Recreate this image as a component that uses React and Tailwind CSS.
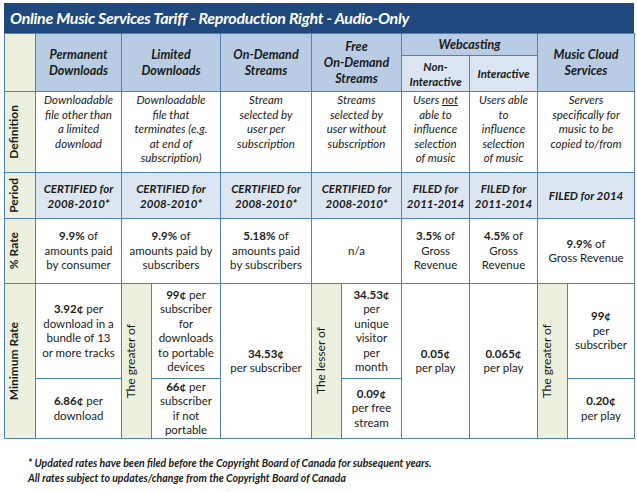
import React from "react";

const head = "border border-[#4f81bd] p-0 text-center align-middle bg-[#b8cce4] font-bold italic text-[12.5px] leading-[16px] text-[#1a1a1a] whitespace-nowrap";
const sub = "border border-[#4f81bd] p-0 text-center align-middle bg-[#dbe5f1] font-bold italic text-[11.5px] leading-[15px] text-[#1a1a1a] whitespace-nowrap";
const label = "border border-[#4f81bd] p-0 bg-[#ebf1de] align-middle";
const defn = "border border-[#4f81bd] p-0 pt-[1px] text-center align-top italic text-[11.5px] leading-[14.5px] text-[#222] whitespace-nowrap";
const period = "border border-[#4f81bd] p-0 text-center align-middle bg-[#dce6f1] font-bold italic text-[11.5px] leading-[15px] text-[#1a1a1a] whitespace-nowrap";
const rate = "border border-[#4f81bd] p-0 text-center align-middle text-[11.5px] leading-[14.5px] text-[#222] whitespace-nowrap";

function Vertical({ children, bold }) {
  return (
    <div
      className={
        "mx-auto [writing-mode:vertical-rl] rotate-180 whitespace-nowrap text-[12px] text-[#1a1a1a] " +
        (bold ? "font-bold" : "font-normal")
      }
    >
      {children}
    </div>
  );
}

function Lines({ items }) {
  return items.map((t, i) => (
    <div key={i}>{t}</div>
  ));
}

function App() {
  return (
    <div className="w-[637px] h-[492px] bg-white pt-[3px] pl-[4px] font-['Lato','Open_Sans',sans-serif]">
      <div className="w-[630px] h-[30px] bg-[#1f497d] text-white font-bold italic text-[16px] tracking-[-0.3px] pl-[6px] flex items-center">
        Online Music Services Tariff - Reproduction Right - Audio-Only
      </div>
      <table className="table-fixed border-collapse w-[630px]">
        <colgroup>
          <col className="w-[31px]" />
          <col className="w-[86px]" />
          <col className="w-[30px]" />
          <col className="w-[69px]" />
          <col className="w-[91px]" />
          <col className="w-[30px]" />
          <col className="w-[60px]" />
          <col className="w-[68px]" />
          <col className="w-[68px]" />
          <col className="w-[30px]" />
          <col className="w-[67px]" />
        </colgroup>
        <tbody>
          <tr className="h-[22px]">
            <td rowSpan={2} className={label}></td>
            <td rowSpan={2} className={head}>
              <Lines items={["Permanent", "Downloads"]} />
            </td>
            <td rowSpan={2} colSpan={2} className={head}>
              <Lines items={["Limited", "Downloads"]} />
            </td>
            <td rowSpan={2} className={head}>
              <Lines items={["On-Demand", "Streams"]} />
            </td>
            <td rowSpan={2} colSpan={2} className={head}>
              <Lines items={["Free", "On-Demand", "Streams"]} />
            </td>
            <td colSpan={2} className={head}>
              Webcasting
            </td>
            <td rowSpan={2} colSpan={2} className={head}>
              <Lines items={["Music Cloud", "Services"]} />
            </td>
          </tr>
          <tr className="h-[36px]">
            <td className={sub}>
              <Lines items={["Non-", "Interactive"]} />
            </td>
            <td className={sub}>Interactive</td>
          </tr>

          <tr className="h-[81px]">
            <td className={label}>
              <Vertical bold>Definition</Vertical>
            </td>
            <td className={defn}>
              <Lines items={["Downloadable", "file other than", "a limited", "download"]} />
            </td>
            <td colSpan={2} className={defn}>
              <Lines items={["Downloadable", "file that", "terminates (e.g.", "at end of", "subscription)"]} />
            </td>
            <td className={defn}>
              <Lines items={["Stream", "selected by", "user per", "subscription"]} />
            </td>
            <td colSpan={2} className={defn}>
              <Lines items={["Streams", "selected by", "user without", "subscription"]} />
            </td>
            <td className={defn}>
              <div>
                Users <span className="underline">not</span>
              </div>
              <Lines items={["able to", "influence", "selection", "of music"]} />
            </td>
            <td className={defn}>
              <Lines items={["Users able", "to", "influence", "selection", "of music"]} />
            </td>
            <td colSpan={2} className={defn}>
              <Lines items={["Servers", "specifically for", "music to be", "copied to/from"]} />
            </td>
          </tr>

          <tr className="h-[46px]">
            <td className={label}>
              <Vertical bold>Period</Vertical>
            </td>
            <td className={period}>
              <Lines items={["CERTIFIED for", "2008-2010*"]} />
            </td>
            <td colSpan={2} className={period}>
              <Lines items={["CERTIFIED for", "2008-2010*"]} />
            </td>
            <td className={period}>
              <Lines items={["CERTIFIED for", "2008-2010*"]} />
            </td>
            <td colSpan={2} className={period}>
              <Lines items={["CERTIFIED for", "2008-2010*"]} />
            </td>
            <td className={period}>
              <Lines items={["FILED for", "2011-2014"]} />
            </td>
            <td className={period}>
              <Lines items={["FILED for", "2011-2014"]} />
            </td>
            <td colSpan={2} className={period}>
              FILED for 2014
            </td>
          </tr>

          <tr className="h-[65px]">
            <td className={label}>
              <Vertical bold>% Rate</Vertical>
            </td>
            <td className={rate}>
              <div>
                <b>9.9%</b> of
              </div>
              <Lines items={["amounts paid", "by consumer"]} />
            </td>
            <td colSpan={2} className={rate}>
              <div>
                <b>9.9%</b> of
              </div>
              <Lines items={["amounts paid by", "subscribers"]} />
            </td>
            <td className={rate}>
              <div>
                <b>5.18%</b> of
              </div>
              <Lines items={["amounts paid", "by subscribers"]} />
            </td>
            <td colSpan={2} className={rate}>
              n/a
            </td>
            <td className={rate}>
              <div>
                <b>3.5%</b> of
              </div>
              <Lines items={["Gross", "Revenue"]} />
            </td>
            <td className={rate}>
              <div>
                <b>4.5%</b> of
              </div>
              <Lines items={["Gross", "Revenue"]} />
            </td>
            <td colSpan={2} className={rate}>
              <div>
                <b>9.9%</b> of
              </div>
              <div>Gross Revenue</div>
            </td>
          </tr>

          <tr className="h-[95px]">
            <td rowSpan={2} className={label}>
              <Vertical bold>Minimum Rate</Vertical>
            </td>
            <td className={rate}>
              <div>
                <b>3.92¢</b> per
              </div>
              <Lines items={["download in a", "bundle of 13", "or more tracks"]} />
            </td>
            <td rowSpan={2} className={label}>
              <Vertical>The greater of</Vertical>
            </td>
            <td className={rate}>
              <div>
                <b>99¢</b> per
              </div>
              <Lines items={["subscriber", "for", "downloads", "to portable", "devices"]} />
            </td>
            <td rowSpan={2} className={rate}>
              <b>34.53¢</b>
              <div>per subscriber</div>
            </td>
            <td rowSpan={2} className={label}>
              <Vertical>The lesser of</Vertical>
            </td>
            <td className={rate}>
              <b>34.53¢</b>
              <Lines items={["per", "unique", "visitor", "per", "month"]} />
            </td>
            <td rowSpan={2} className={rate}>
              <b>0.05¢</b>
              <div>per play</div>
            </td>
            <td rowSpan={2} className={rate}>
              <b>0.065¢</b>
              <div>per play</div>
            </td>
            <td rowSpan={2} className={label}>
              <Vertical>The greater of</Vertical>
            </td>
            <td className={rate}>
              <b>99¢</b>
              <Lines items={["per", "subscriber"]} />
            </td>
          </tr>
          <tr className="h-[60px]">
            <td className={rate}>
              <div>
                <b>6.86¢</b> per
              </div>
              <div>download</div>
            </td>
            <td className={rate}>
              <div>
                <b>66¢</b> per
              </div>
              <Lines items={["subscriber", "if not", "portable"]} />
            </td>
            <td className={rate}>
              <b>0.09¢</b>
              <Lines items={["per free", "stream"]} />
            </td>
            <td className={rate}>
              <b>0.20¢</b>
              <div>per play</div>
            </td>
          </tr>
        </tbody>
      </table>
      <div className="pl-[24px] pt-[17px] font-bold italic text-[10.5px] leading-[15px] text-[#1a1a1a]">
        <p>* Updated rates have been filed before the Copyright Board of Canada for subsequent years.</p>
        <p>All rates subject to updates/change from the Copyright Board of Canada</p>
      </div>
    </div>
  );
}

export default App;
